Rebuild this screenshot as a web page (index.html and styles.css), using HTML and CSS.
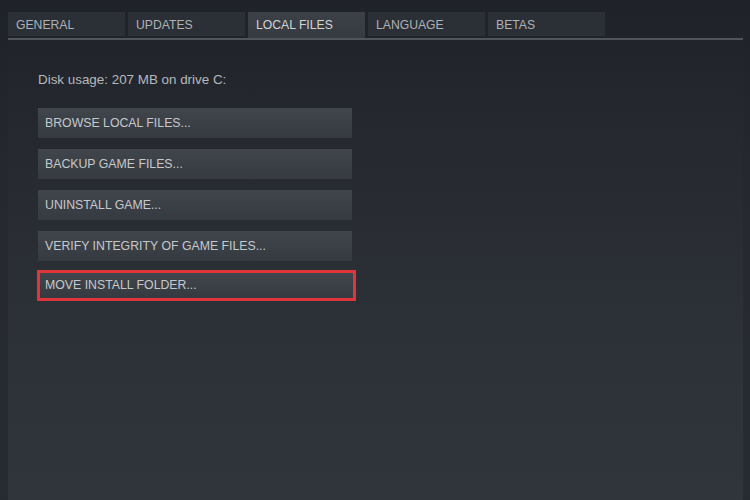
FILE: index.html
```html
<!DOCTYPE html>
<html>
<head>
<meta charset="utf-8">
<link rel="stylesheet" href="styles.css">
</head>
<body>
<div class="window">
  <div class="edge edge-left"></div>
  <div class="main">
    <div class="tabs">
      <div class="tab">GENERAL</div>
      <div class="tab">UPDATES</div>
      <div class="tab active">LOCAL FILES</div>
      <div class="tab">LANGUAGE</div>
      <div class="tab">BETAS</div>
    </div>
    <div class="tabline"></div>
    <div class="content">
      <div class="disk">Disk usage: 207 MB on drive C:</div>
      <div class="buttons">
        <div class="btn">BROWSE LOCAL FILES...</div>
        <div class="btn">BACKUP GAME FILES...</div>
        <div class="btn">UNINSTALL GAME...</div>
        <div class="btn">VERIFY INTEGRITY OF GAME FILES...</div>
        <div class="btn highlighted">MOVE INSTALL FOLDER...</div>
      </div>
    </div>
  </div>
  <div class="edge edge-right"></div>
</div>
</body>
</html>
```
FILE: styles.css
```css
html, body {
  margin: 0;
  padding: 0;
}
body {
  width: 750px;
  height: 500px;
  overflow: hidden;
  font-family: "Liberation Sans", Arial, sans-serif;
  background: linear-gradient(to bottom, #1f2228 0%, #262a30 30%, #2d3138 70%, #30353c 100%);
}
.window {
  display: flex;
  height: 500px;
}
.edge {
  width: 8px;
  flex: none;
}
.edge-left {
  background: linear-gradient(to bottom, rgba(0,0,0,0) 0%, rgba(0,0,0,0.08) 40%, rgba(0,0,0,0.18) 100%);
}
.edge-right {
  background: linear-gradient(to bottom, rgba(0,0,0,0) 0%, rgba(0,0,0,0.08) 40%, rgba(0,0,0,0.18) 100%);
}
.main {
  flex: 1;
  display: flex;
  flex-direction: column;
}
.tabs {
  display: flex;
  gap: 3px;
  margin-top: 12px;
  height: 26px;
  align-items: flex-start;
}
.tab {
  width: 117px;
  height: 24px;
  box-sizing: border-box;
  padding-left: 8px;
  line-height: 26px;
  font-size: 12.2px;
  color: #aeb2b6;
  background: #2b2f36;
}
.tab.active {
  height: 26px;
  color: #d2d5d8;
  background: linear-gradient(to bottom, #3c4047, #363a41);
}
.tabline {
  height: 2px;
  width: 735px;
  background: #50555c;
}
.content {
  padding-left: 30px;
  padding-top: 32px;
}
.disk {
  font-size: 13.4px;
  color: #b5b9bd;
  line-height: 16px;
}
.buttons {
  display: flex;
  flex-direction: column;
  gap: 11px;
  margin-top: 20px;
}
.btn {
  width: 314px;
  height: 30px;
  box-sizing: border-box;
  padding-left: 7px;
  line-height: 30px;
  font-size: 12.3px;
  color: #c6c9cc;
  background: linear-gradient(to bottom, #41464d, #353940);
}
.btn.highlighted {
  width: 319px;
  height: 31px;
  margin-left: -1px;
  margin-top: -2px;
  border: 3px solid #e0363b;
  padding-left: 5px;
  line-height: 25px;
}
```
